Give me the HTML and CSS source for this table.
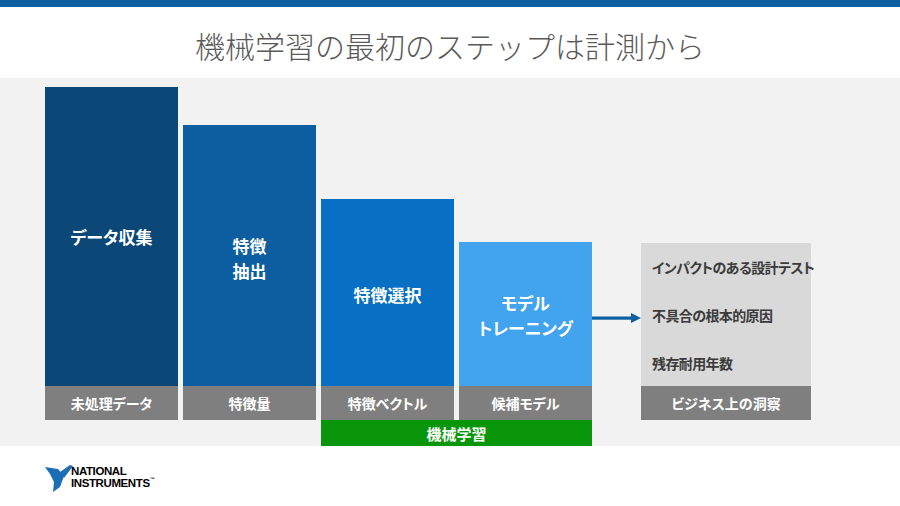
FILE: index.html
```html
<!DOCTYPE html>
<html lang="ja">
<head>
<meta charset="utf-8">
<title>機械学習の最初のステップは計測から</title>
<link rel="stylesheet" href="styles.css">
</head>
<body>
<div class="topbar"></div>
<header class="title">機械学習の最初のステップは計測から</header>
<section class="band">
  <div class="flow">
    <div class="stage s1">
      <div class="block">データ収集</div>
      <div class="label">未処理データ</div>
    </div>
    <div class="stage s2">
      <div class="block">特徴<br>抽出</div>
      <div class="label">特徴量</div>
    </div>
    <div class="stage s3">
      <div class="block">特徴選択</div>
      <div class="label">特徴ベクトル</div>
    </div>
    <div class="stage s4">
      <div class="block">モデル<br>トレーニング</div>
      <div class="label">候補モデル</div>
    </div>
    <div class="arrow">
      <svg width="49" height="12" viewBox="0 0 49 12"><rect x="0" y="4.5" width="40" height="3.2" fill="#0d5fa2"/><polygon points="39,1 49,6 39,11" fill="#0d5fa2"/></svg>
    </div>
    <div class="stage result">
      <div class="block insights">
        <div>インパクトのある設計テスト</div>
        <div>不具合の根本的原因</div>
        <div>残存耐用年数</div>
      </div>
      <div class="label">ビジネス上の洞察</div>
    </div>
    <div class="ml">機械学習</div>
  </div>
</section>
<footer class="footer">
  <div class="logo">
    <svg class="eagle" width="30" height="30" viewBox="0 0 30 30">
      <polygon points="1,3 14,5 20,12 16,23 9,28 10,18 6,10" fill="#1b6db8"/>
      <polygon points="16,8 26,1 29,2 20,14" fill="#1b6db8"/>
    </svg>
    <div class="logotext"><span>NATIONAL</span><span>INSTRUMENTS<sup>™</sup></span></div>
  </div>
</footer>
</body>
</html>
```

FILE: styles.css
```css
html, body {
  margin: 0;
  padding: 0;
}
body {
  width: 900px;
  height: 506px;
  background: #ffffff;
  font-family: "Noto Sans CJK JP", "Noto Sans", sans-serif;
  overflow: hidden;
}
.topbar {
  height: 7px;
  background: #0d5fa2;
}
.title {
  height: 71px;
  display: flex;
  align-items: center;
  justify-content: center;
  font-size: 30px;
  font-weight: 300;
  color: #5a5a5a;
  padding-top: 5px;
  box-sizing: border-box;
}
.band {
  height: 368px;
  background: #f2f2f2;
  padding: 9px 0 0 45px;
  box-sizing: border-box;
}
.flow {
  display: grid;
  grid-template-columns: 133px 133px 133px 133px 39px 170px;
  grid-template-rows: 333px 26px;
  column-gap: 5px;
}
.stage {
  grid-row: 1;
  align-self: end;
  display: flex;
  flex-direction: column;
  font-feature-settings: "palt";
}
.block {
  flex: 1;
  display: flex;
  align-items: center;
  justify-content: center;
  text-align: center;
  color: #ffffff;
  font-weight: 700;
  font-size: 17px;
  line-height: 25px;
}
.s1 { height: 333px; }
.s1 .block { background: #0b4777; }
.s2 { height: 295px; }
.s2 .block { background: #0c5ea0; padding-top: 4px; }
.s3 { height: 221px; }
.s3 .block { background: #0870c4; padding-top: 4px; }
.s4 { height: 178px; }
.s4 .block { background: #42a3ef; padding-top: 2px; }
.label {
  height: 34px;
  flex: none;
  display: flex;
  align-items: center;
  justify-content: center;
  background: #7f7f7f;
  color: #ffffff;
  font-weight: 700;
  font-size: 14px;
}
.arrow {
  grid-row: 1;
  grid-column: 5;
  align-self: end;
  margin: 0 -5px 96px -5px;
  height: 12px;
  display: flex;
  justify-content: center;
}
.arrow svg { display: block; }
.result {
  grid-column: 6;
  height: 177px;
}
.insights {
  background: #d9d9d9;
  color: #3b3b3b;
  font-size: 14px;
  letter-spacing: -0.6px;
  line-height: 20px;
  white-space: nowrap;
  flex-direction: column;
  align-items: flex-start;
  justify-content: flex-start;
  text-align: left;
  padding: 14px 0 0 11px;
  gap: 28px;
}
.ml {
  grid-row: 2;
  grid-column: 3 / span 2;
  background: #0a960a;
  color: #ffffff;
  font-weight: 700;
  font-size: 15px;
  display: flex;
  align-items: center;
  justify-content: center;
}
.footer {
  padding: 18px 0 0 44px;
}
.logo {
  display: flex;
  align-items: flex-start;
}
.eagle {
  display: block;
  margin-right: -3px;
}
.logotext {
  display: flex;
  flex-direction: column;
  font-family: "Liberation Sans", Arial, sans-serif;
  font-weight: 700;
  font-size: 11.5px;
  line-height: 12px;
  letter-spacing: -0.4px;
  color: #000000;
  padding-top: 1px;
}
.logotext sup {
  font-size: 5px;
  vertical-align: top;
  line-height: 5px;
}
```
